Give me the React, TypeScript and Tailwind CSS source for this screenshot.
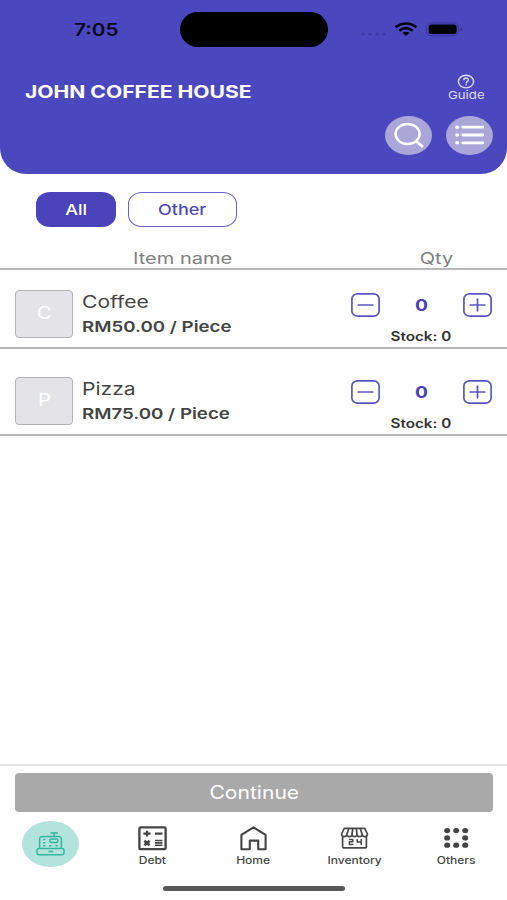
import React from "react";
import clsx from "clsx";

type Item = { name: string; price: string; stock: number };

const items: Item[] = [
  { name: "Coffee", price: "RM50.00 / Piece", stock: 0 },
  { name: "Pizza", price: "RM75.00 / Piece", stock: 0 },
];

// Wide lettering: Inter stretched horizontally
function Wide({ className, children }: { className?: string; children: React.ReactNode }) {
  return (
    <span className={clsx("inline-block whitespace-nowrap leading-none", className)}>{children}</span>
  );
}

function StatusBar() {
  return (
    <div className="flex h-[59px] items-center">
      <div className="flex w-[180px] justify-center pt-px pl-3">
        <Wide className="scale-x-[1.22] text-[17px] font-semibold text-[#0a0a1e]">7:05</Wide>
      </div>
      <div className="h-[35px] w-[148px] rounded-full bg-black" />
      <svg className="ml-8" width="105" height="16" viewBox="0 0 105 16">
        <g fill="#3d3aa2">
          <circle cx="3" cy="12" r="1.6" />
          <circle cx="10" cy="12" r="1.6" />
          <circle cx="17" cy="12" r="1.6" />
          <circle cx="24" cy="12" r="1.6" />
        </g>
        <g fill="none" stroke="#05050f" strokeWidth="2.6">
          <path d="M35.6 5.2 C42 .2 50 .2 56.4 5.2" />
          <path d="M39.4 8.7 C43.5 5.4 48.5 5.4 52.6 8.7" />
        </g>
        <path d="M42.4 10.9 Q46 8.4 49.6 10.9 L46 13.8Z" fill="#05050f" />
        <rect x="66.5" y="1" width="32" height="12.6" rx="4.5" fill="none" stroke="#37349a" />
        <rect x="68.6" y="2.6" width="28" height="9.4" rx="2.8" fill="#000" />
        <path d="M100.8 5.4 Q102.8 7.5 100.8 9.6Z" fill="#25236c" />
      </svg>
    </div>
  );
}

function Header() {
  return (
    <header className="h-[173.5px] rounded-b-[26px] bg-[#4b47bf]">
      <StatusBar />
      <div className="flex h-[56.5px] justify-between pr-[23px] pl-[24.5px]">
        <h1 className="mt-[24.5px] flex text-white">
          <Wide className="origin-left scale-x-[1.24] text-[17px] font-bold">JOHN COFFEE HOUSE</Wide>
        </h1>
        <button className="flex w-9 flex-col items-center pt-[14.5px] text-[#dcdcf5]">
          <svg width="18" height="15" viewBox="0 0 18 15" fill="none" stroke="currentColor" strokeWidth="1.4">
            <ellipse cx="9" cy="7.6" rx="7.6" ry="6.3" />
            <path d="M6.8 6.2 C6.8 3.4 11.4 3.4 11.4 5.9 C11.4 7.5 9.2 7.4 9.2 9.4" />
            <path d="M9.2 10.2v1.4" />
          </svg>
          <Wide className="mt-px scale-x-[1.2] text-[11px]">Guide</Wide>
        </button>
      </div>
      <div className="flex justify-end gap-3.5 pr-3.5">
        <button className="flex h-[39px] w-[47px] items-center justify-center rounded-[50%] bg-[#aaa7d8]">
          <svg width="30" height="26" viewBox="0 0 30 26" fill="none" stroke="#fff" strokeWidth="2.4" strokeLinecap="round">
            <ellipse cx="13.6" cy="12" rx="12" ry="10" />
            <path d="M22.3 19.2 L28 24.2" strokeWidth="2.8" />
          </svg>
        </button>
        <button className="flex h-[39px] w-[47px] items-center justify-center rounded-[50%] bg-[#aaa7d8]">
          <svg width="30" height="20" viewBox="0 0 30 20" fill="#fff">
            <ellipse cx="2.2" cy="2.2" rx="2" ry="1.8" />
            <ellipse cx="2.2" cy="10" rx="2" ry="1.8" />
            <ellipse cx="2.2" cy="17.8" rx="2" ry="1.8" />
            <path d="M7.8 2.2h20M7.8 10h20M7.8 17.8h20" stroke="#fff" strokeWidth="2.8" strokeLinecap="round" />
          </svg>
        </button>
      </div>
    </header>
  );
}

function StepButton({ plus }: { plus?: boolean }) {
  return (
    <button className="text-[#5b55c2]">
      <svg className="block" width="29" height="24" viewBox="0 0 29 24" fill="none" stroke="currentColor" strokeWidth="1.7">
        <rect x=".9" y=".9" width="27.2" height="22.2" rx="5.5" ry="4.8" />
        <path d="M7.2 12h14.6" strokeLinecap="round" />
        {plus && <path d="M14.5 6.2v11.6" strokeLinecap="round" />}
      </svg>
    </button>
  );
}

function ItemRow({ item, first }: { item: Item; first: boolean }) {
  return (
    <li
      className={clsx(
        "flex border-b-2 border-[#b8b8b8] px-[15px]",
        first ? "h-[79px] pt-[19.5px]" : "h-[87px] pt-[27.5px]"
      )}
    >
      <div className="flex h-12 w-[58px] items-center justify-center rounded border-[1.5px] border-[#b5b5b9] bg-[#e3e3e8] text-white">
        <Wide className="scale-x-[1.2] text-[17px]">{item.name[0]}</Wide>
      </div>
      <div className="ml-[9px] flex flex-1 flex-col items-start pt-[4.5px] text-[#444]">
        <Wide className="origin-left scale-x-[1.24] text-[17px]">{item.name}</Wide>
        <Wide className="mt-[7.5px] origin-left scale-x-[1.246] text-[15px] font-semibold">{item.price}</Wide>
      </div>
      <div className="flex w-[141px] flex-col items-center pt-[3px]">
        <div className="flex w-full items-center justify-between">
          <StepButton />
          <Wide className="scale-x-[1.2] text-[16px] font-bold text-[#4b3fb5]">{item.stock}</Wide>
          <StepButton plus />
        </div>
        <Wide className="mt-[14px] mr-px scale-x-[1.22] text-[12.5px] font-semibold text-[#333]">Stock: {item.stock}</Wide>
      </div>
    </li>
  );
}

function RegisterIcon() {
  return (
    <svg width="29" height="24" viewBox="0 0 29 24" fill="none" stroke="#35b5a0" strokeWidth="1.5" strokeLinejoin="round">
      <path d="M14.5 1h7.4M18.2 1v3.2" />
      <path d="M3.6 16.4V7.6Q3.6 4.4 7 4.4h15Q25.4 4.4 25.4 7.6v8.8" />
      <rect x="1" y="16.4" width="27" height="6.4" rx="2" />
      <rect x="13.8" y="7" width="8" height="3.6" rx="1.4" />
      <path d="M7.2 7.6h2.2M7.2 10.8h2.2M7.2 13.8h2.2M13 13.8h2.4M19.4 13.8h2.4M12.5 19.6h4.6" />
    </svg>
  );
}

function DebtIcon() {
  return (
    <svg width="29" height="25" viewBox="0 0 29 25" fill="none" stroke="#444" strokeWidth="2.3">
      <rect x="1.4" y="1.4" width="26.2" height="21.8" rx="1.2" />
      <path d="M5.4 7.6h7.2M9 4.8v5.6M17 7.6h7.4" strokeWidth="2.2" />
      <path d="M17 14.5h7.4M17 16.9h7.4M17 19.3h7.4" strokeWidth="1.6" />
      <path d="M6.4 14.7l5.2 4.6M11.6 14.7l-5.2 4.6" strokeWidth="2.6" />
    </svg>
  );
}

function HomeIcon() {
  return (
    <svg width="29" height="25" viewBox="0 0 29 25" fill="none" stroke="#444" strokeWidth="2.1" strokeLinejoin="round">
      <path d="M2.4 23.2V8.8L14.5 1.4 26.6 8.8v14.4h-7.4v-8.6h-8.4v8.6Z" />
    </svg>
  );
}

function InventoryIcon() {
  return (
    <svg width="29" height="25" viewBox="0 0 29 25" fill="none" stroke="#484848" strokeWidth="1.7" strokeLinejoin="round">
      <path d="M4.2 2.4h20.6L27.4 8c0 3.4-4.6 3.4-5.2.6-.4 2.6-4.8 2.6-5.2 0-.4 2.6-4.6 2.6-5 0-.4 2.6-4.8 2.6-5.2 0C6.2 11.4 1.6 11.4 1.6 8Z" />
      <path d="M8.8 2.4 6.8 8.6M12.8 2.4 12 8.6M16.4 2.4 17 8.6M20.2 2.4 22.2 8.6" />
      <path d="M2.6 10.6v10.2q0 1 1 1h21.8q1 0 1-1V10.6" />
      <path d="M9 13.4h3.8v2.4H9.4v2.7h3.9M17.2 13v2.9h4.2M21.2 13v5.9" strokeWidth="1.5" />
    </svg>
  );
}

function OthersIcon() {
  const dots = [[0, 0], [1, 0], [2, 0], [0, 1], [2, 1], [0, 2], [1, 2], [2, 2]];
  return (
    <svg width="29" height="25" viewBox="0 0 29 25" fill="#444">
      {dots.map(([c, r]) => (
        <ellipse key={`${c}-${r}`} cx={5.2 + c * 9} cy={4.6 + r * 7.3} rx="3" ry="2.6" />
      ))}
    </svg>
  );
}

const tabs = [
  { name: "Debt", icon: DebtIcon },
  { name: "Home", icon: HomeIcon },
  { name: "Inventory", icon: InventoryIcon },
  { name: "Others", icon: OthersIcon },
];

export default function App() {
  return (
    <div className="flex h-[900px] w-[507px] flex-col overflow-hidden bg-white font-['Inter',sans-serif]">
      <Header />

      {/* Category filter */}
      <div className="flex gap-3 pt-[18.5px] pl-9">
        <button className="flex h-[34.5px] w-20 items-center justify-center rounded-[14px_/_12px] bg-[#4b43b9] text-white">
          <Wide className="scale-x-[1.2] text-[15px] font-medium">All</Wide>
        </button>
        <button className="flex h-[34.5px] w-[108.5px] items-center justify-center rounded-[14px_/_12px] border-[1.5px] border-[#6a62c8] text-[#5048bb]">
          <Wide className="scale-x-[1.2] text-[15px] font-medium">Other</Wide>
        </button>
      </div>

      {/* Column titles */}
      <div className="flex h-[43.5px] items-end border-b-2 border-[#b8b8b8] pb-[2.5px] text-[#808080]">
        <div className="flex w-[366px] justify-center">
          <Wide className="scale-x-[1.25] text-[16px]">Item name</Wide>
        </div>
        <div className="flex w-[141px] justify-center">
          <Wide className="scale-x-[1.25] text-[16px]">Qty</Wide>
        </div>
      </div>

      <ul>
        {items.map((item, i) => (
          <ItemRow key={item.name} item={item} first={i === 0} />
        ))}
      </ul>

      <footer className="mt-auto h-[136px] border-t-2 border-[#e2e2e2]">
        <div className="pt-[7px] pr-[14px] pl-[15px]">
          <button className="flex h-[39px] w-full items-center justify-center rounded bg-[#a9a9a9] pt-px text-white">
            <Wide className="scale-x-[1.17] text-[18px]">Continue</Wide>
          </button>
        </div>
        <nav className="grid h-[70px] grid-cols-5 pt-[8.5px]">
          <button className="flex items-start justify-center">
            <span className="flex h-[46px] w-[57px] items-center justify-center rounded-[50%] bg-[#b3e4dc]">
              <RegisterIcon />
            </span>
          </button>
          {tabs.map(({ name, icon: Icon }) => (
            <button key={name} className="flex flex-col items-center pt-[5px] text-[#444]">
              <Icon />
              <Wide className="mt-1 scale-x-[1.2] text-[10px] font-medium">{name}</Wide>
            </button>
          ))}
        </nav>
        <div className="mx-auto mt-1 h-[5px] w-[182px] rounded-full bg-[#58585a]" />
      </footer>
    </div>
  );
}
